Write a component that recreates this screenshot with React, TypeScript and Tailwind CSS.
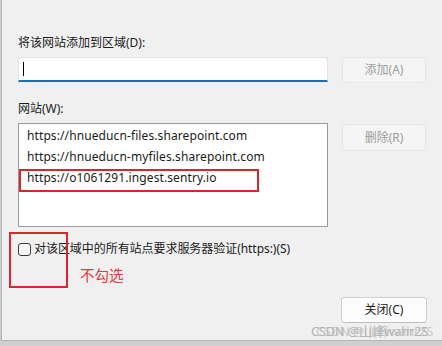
import React from "react";

const uiFont = {
  fontFamily: '"Noto Sans", "Noto Sans CJK SC", sans-serif',
};

const sites = [
  "https://hnueducn-files.sharepoint.com",
  "https://hnueducn-myfiles.sharepoint.com",
  "https://o1061291.ingest.sentry.io",
];

export default function App() {
  return (
    <div className="w-[442px] h-[346px] bg-[#cfcfcf] overflow-hidden" style={uiFont}>
      <div className="relative ml-[1px] h-[341px] border-l border-b border-[#b5b5b5] bg-[#f0f0f0] pl-[16px] pr-[15px] pt-[36px] text-[12px] text-[#1b1b1b]">
        <div className="leading-[14px]">将该网站添加到区域(D):</div>

        <div className="mt-[7px] flex items-start">
          <div className="w-[310px] h-[25px] bg-white border border-[#e3e3e3] border-b-2 border-b-[#1a6fb8] rounded-t-[3px] flex items-center pl-[4px]">
            <div className="w-[1px] h-[14px] bg-black" />
          </div>
          <button className="ml-[14px] w-[84px] h-[26px] rounded-[4px] border border-[#e6e6e6] bg-[#f5f5f5] text-[#9d9d9d] text-[12px]">
            添加(A)
          </button>
        </div>

        <div className="mt-[19px] leading-[14px]">网站(W):</div>

        <div className="mt-[7px] flex items-start">
          <div className="relative w-[310px] h-[104px] bg-white border border-[#9a9a9a] pt-[1px] pl-[8px]">
            {sites.map((s) => (
              <div key={s} className="h-[21px] leading-[21px] text-[12px] tracking-[0.1px]">
                {s}
              </div>
            ))}
            <div className="absolute left-[0px] top-[45px] w-[240px] h-[23px] border-2 border-[#d8262e]" />
          </div>
          <button className="ml-[14px] mt-[1px] w-[84px] h-[27px] rounded-[4px] border border-[#e6e6e6] bg-[#f5f5f5] text-[#9d9d9d] text-[12px]">
            删除(R)
          </button>
        </div>

        <div className="relative mt-[15px] flex items-center h-[14px]">
          <div className="w-[13px] h-[13px] rounded-[3px] border border-[#3c3c3c] bg-[#f7f7f7]" />
          <span className="ml-[3px] text-[12px] leading-[14px] tracking-[-0.05px] whitespace-nowrap">
            对该区域中的所有站点要求服务器验证(https:)(S)
          </span>
          <div className="absolute left-[-9px] top-[-10px] w-[59px] h-[56px] border-2 border-[#d8262e]" />
        </div>

        <div className="mt-[11px] ml-[62px] text-[14.5px] leading-[16px] text-[#e0393e]">不勾选</div>

        <div className="mt-[14px] flex justify-end">
          <button className="w-[86px] h-[26px] rounded-[4px] border border-[#d0d0d0] border-b-[#bdbdbd] bg-[#fdfdfd] text-[12px] text-[#1b1b1b]">
            关闭(C)
          </button>
        </div>

        <div className="absolute right-[14px] top-[324px] whitespace-nowrap text-[13px] leading-[14px] text-[#b4b4b4] tracking-[-0.3px] [text-shadow:5px_0_0_rgba(185,185,185,0.7)]">
          CSDN @山峰wahr2S
        </div>
      </div>
    </div>
  );
}
